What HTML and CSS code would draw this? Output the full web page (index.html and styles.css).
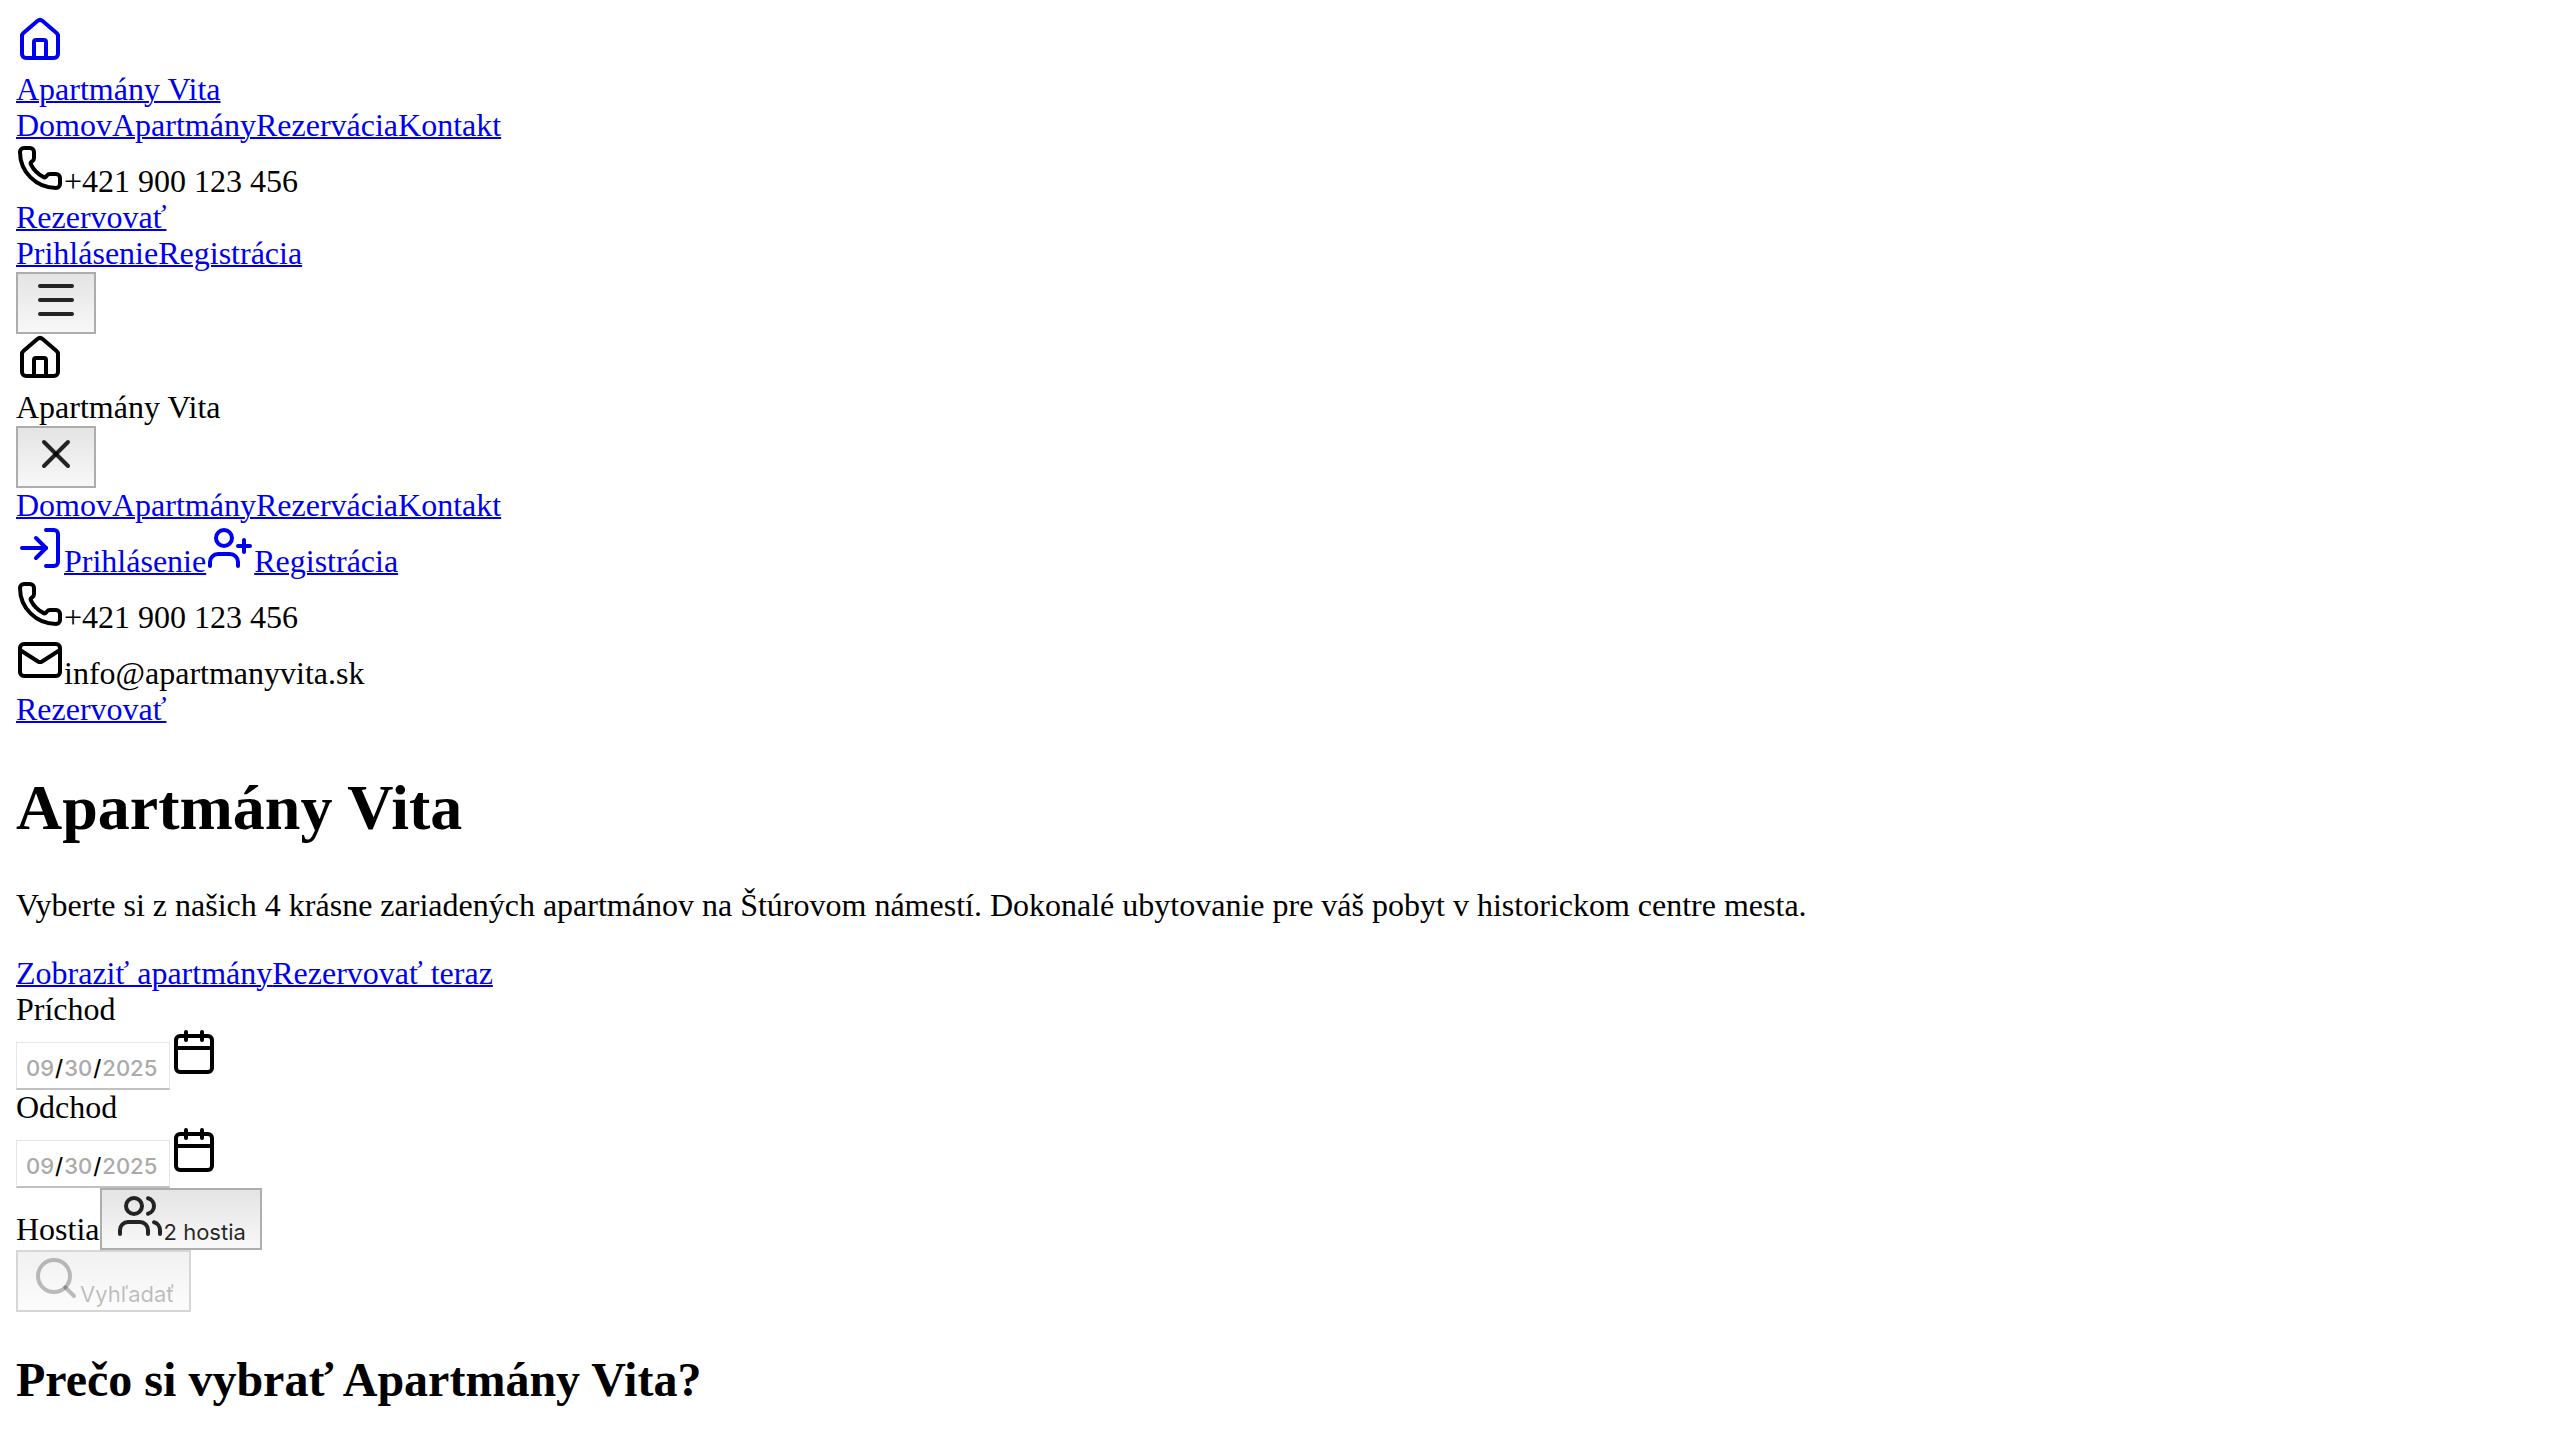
FILE: index.html
```html
<!DOCTYPE html>
<html lang="sk">
<head>
<meta charset="utf-8">
<meta name="viewport" content="width=device-width, initial-scale=1">
<title>Apartmány Vita</title>
<link rel="stylesheet" href="styles.css">
</head>
<body>
<svg class="sprite" aria-hidden="true">
  <symbol id="house" viewBox="0 0 24 24"><path d="M15 21v-8a1 1 0 0 0-1-1h-4a1 1 0 0 0-1 1v8"/><path d="M3 10a2 2 0 0 1 .709-1.528l7-5.999a2 2 0 0 1 2.582 0l7 5.999A2 2 0 0 1 21 10v9a2 2 0 0 1-2 2H5a2 2 0 0 1-2-2z"/></symbol>
  <symbol id="phone" viewBox="0 0 24 24"><path d="M13.832 16.568a1 1 0 0 0 1.213-.303l.355-.465A2 2 0 0 1 17 15h3a2 2 0 0 1 2 2v3a2 2 0 0 1-2 2A18 18 0 0 1 2 4a2 2 0 0 1 2-2h3a2 2 0 0 1 2 2v3a2 2 0 0 1-.8 1.6l-.468.351a1 1 0 0 0-.292 1.233 14 14 0 0 0 6.392 6.384"/></symbol>
  <symbol id="menu" viewBox="0 0 24 24"><path d="M4 5h16"/><path d="M4 12h16"/><path d="M4 19h16"/></symbol>
  <symbol id="close" viewBox="0 0 24 24"><path d="M18 6 6 18"/><path d="m6 6 12 12"/></symbol>
  <symbol id="log-in" viewBox="0 0 24 24"><path d="m10 17 5-5-5-5"/><path d="M15 12H3"/><path d="M15 3h4a2 2 0 0 1 2 2v14a2 2 0 0 1-2 2h-4"/></symbol>
  <symbol id="user-plus" viewBox="0 0 24 24"><path d="M16 21v-2a4 4 0 0 0-4-4H6a4 4 0 0 0-4 4v2"/><circle cx="9" cy="7" r="4"/><path d="M19 8v6"/><path d="M22 11h-6"/></symbol>
  <symbol id="mail" viewBox="0 0 24 24"><path d="m22 7-8.991 5.727a2 2 0 0 1-2.009 0L2 7"/><rect x="2" y="4" width="20" height="16" rx="2"/></symbol>
  <symbol id="calendar" viewBox="0 0 24 24"><path d="M8 2v4"/><path d="M16 2v4"/><rect width="18" height="18" x="3" y="4" rx="2"/><path d="M3 10h18"/></symbol>
  <symbol id="users" viewBox="0 0 24 24"><path d="M16 21v-2a4 4 0 0 0-4-4H6a4 4 0 0 0-4 4v2"/><path d="M16 3.128a4 4 0 0 1 0 7.744"/><path d="M22 21v-2a4 4 0 0 0-3-3.87"/><circle cx="9" cy="7" r="4"/></symbol>
  <symbol id="search" viewBox="0 0 24 24"><path d="m21 21-4.340-4.340"/><circle cx="11" cy="11" r="8"/></symbol>
</svg>

<header>
  <a href="#" class="brand">
    <div class="icon-row"><svg class="icon"><use href="#house"/></svg></div>
    <div class="row">Apartmány Vita</div>
  </a>
  <nav class="row"><a href="#">Domov</a><a href="#">Apartmány</a><a href="#">Rezervácia</a><a href="#">Kontakt</a></nav>
  <div class="icon-row"><svg class="icon"><use href="#phone"/></svg><span>+421 900 123 456</span></div>
  <div class="row"><a href="#">Rezervovať</a></div>
  <div class="row"><a href="#">Prihlásenie</a><a href="#">Registrácia</a></div>
  <button class="button" type="button" aria-label="Menu"><svg class="icon"><use href="#menu"/></svg></button>

  <div class="icon-row"><svg class="icon"><use href="#house"/></svg></div>
  <div class="row">Apartmány Vita</div>
  <button class="button" type="button" aria-label="Zavrieť"><svg class="icon"><use href="#close"/></svg></button>
  <nav class="row"><a href="#">Domov</a><a href="#">Apartmány</a><a href="#">Rezervácia</a><a href="#">Kontakt</a></nav>
  <div class="icon-row"><a href="#"><svg class="icon"><use href="#log-in"/></svg>Prihlásenie</a><a href="#"><svg class="icon"><use href="#user-plus"/></svg>Registrácia</a></div>
  <div class="icon-row"><svg class="icon"><use href="#phone"/></svg><span>+421 900 123 456</span></div>
  <div class="icon-row"><svg class="icon"><use href="#mail"/></svg><span>info@apartmanyvita.sk</span></div>
  <div class="row"><a href="#">Rezervovať</a></div>
</header>

<main>
  <h1>Apartmány Vita</h1>
  <p>Vyberte si z našich 4 krásne zariadených apartmánov na Štúrovom námestí. Dokonalé ubytovanie pre váš pobyt v historickom centre mesta.</p>
  <div class="row"><a href="#">Zobraziť apartmány</a><a href="#">Rezervovať teraz</a></div>

  <form>
    <div class="row"><label for="arrival">Príchod</label></div>
    <div class="field"><input class="date" type="date" id="arrival" value="2025-09-30"><svg class="icon"><use href="#calendar"/></svg></div>
    <div class="row"><label for="departure">Odchod</label></div>
    <div class="field"><input class="date" type="date" id="departure" value="2025-09-30"><svg class="icon"><use href="#calendar"/></svg></div>
    <div class="field"><label for="guests">Hostia</label><button class="button" type="button" id="guests"><svg class="icon"><use href="#users"/></svg>2 hostia</button></div>
    <button class="button" type="submit" disabled><svg class="icon"><use href="#search"/></svg>Vyhľadať</button>
  </form>

  <h2>Prečo si vybrať Apartmány Vita?</h2>
</main>
</body>
</html>
```
FILE: styles.css
```css
body {
  margin: 16px;
  background: #fff;
  color: #000;
  font: 32px/34px "Liberation Serif", "Times New Roman", serif;
}

a {
  color: #0000ee;
  text-decoration: underline;
  text-decoration-thickness: 2px;
}

.sprite {
  display: none;
}

.icon {
  width: 48px;
  height: 48px;
  fill: none;
  stroke: currentColor;
  stroke-width: 2;
  stroke-linecap: round;
  stroke-linejoin: round;
  vertical-align: baseline;
}

.brand {
  display: block;
}

.row {
  min-height: 36px;
}

.icon-row {
  min-height: 56px;
}

.field {
  display: flex;
  align-items: baseline;
  min-height: 62px;
}

.button {
  display: block;
  height: 62px;
  margin: 0;
  padding: 0 14px 2px;
  border: 2px solid #adadad;
  border-radius: 0;
  background: linear-gradient(#e4e4e4, #f8f8f8);
  color: rgba(0, 0, 0, 0.85);
  font: 22px/26px Inter, sans-serif;
}

.button:disabled {
  border-color: #d6d6d6;
  background: linear-gradient(#f1f1f1, #fcfcfc);
  color: rgba(0, 0, 0, 0.25);
}

.date {
  box-sizing: border-box;
  width: 154px;
  height: 48px;
  margin: 0;
  padding: 6px 0 0 8px;
  border: 1px solid #e6e6e6;
  border-bottom: 2px solid #c0c0c0;
  border-radius: 0;
  background: #fff;
  color: #000;
  font: 500 22px/26px Inter, sans-serif;
}

.date::-webkit-calendar-picker-indicator {
  display: none;
}

.date::-webkit-datetime-edit-month-field,
.date::-webkit-datetime-edit-day-field,
.date::-webkit-datetime-edit-year-field {
  padding: 0 1px;
  color: #aaa;
}

h1 {
  margin: 43px 0;
  font-size: 64px;
  line-height: 74px;
}

p {
  min-height: 36px;
  margin: 32px 0;
}

h2 {
  margin: 40px 0;
  font-size: 48px;
  line-height: 56px;
}
```
